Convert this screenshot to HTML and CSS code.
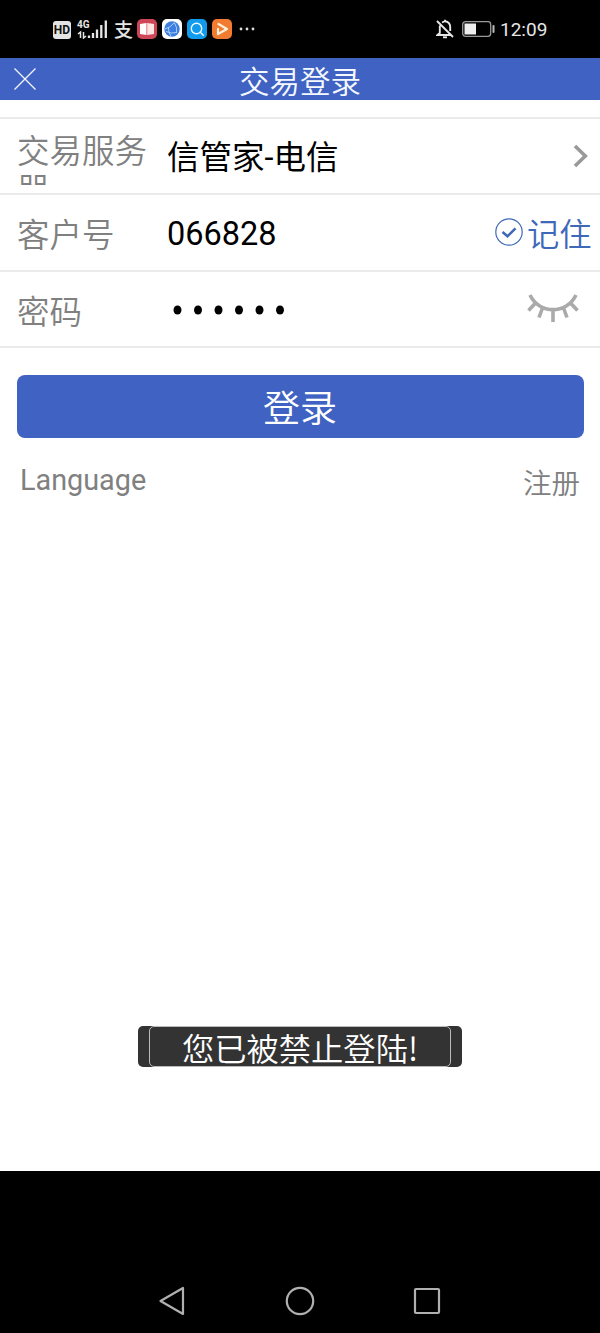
FILE: index.html
```html
<!DOCTYPE html>
<html lang="zh-CN">
<head>
<meta charset="utf-8">
<title>交易登录</title>
<link rel="stylesheet" href="styles.css">
</head>
<body>
<div class="phone">
  <div class="status">
    <div class="status-left">
      <span class="hd">HD</span>
      <span class="network">
        <span class="network-type">4G</span>
        <svg class="signal" width="32" height="20" viewBox="0 0 32 20" fill="none" stroke="#e6e6e6">
          <path d="M3.500 19v-6L1 15M6.500 13v6l2.500-2" stroke-width="1.500"/>
          <path d="M12 19v-2.500M16 19v-5M20 19V10.500M24.300 19V6M28.800 19V1.500" stroke-width="2.300"/>
        </svg>
      </span>
      <span class="pay">支</span>
      <svg class="app" viewBox="0 0 20 20"><rect width="20" height="20" rx="5" fill="#cf4658"/><path d="M3 5l6.500-1v12L3 15z" fill="#fff"/><path d="M10.200 4l6.800 1v10l-6.800 1z" fill="#fbe3e2"/></svg>
      <svg class="app" viewBox="0 0 20 20"><rect width="20" height="20" rx="5" fill="#fff"/><circle cx="10" cy="10" r="7.700" fill="#3c7fe0"/><path d="M3 10Q8 9 12.500 3.500M6.500 8.500Q6 13.500 9 17.300M12.500 4Q15.500 8 14.500 14M4 12.500Q9 15 15 13.500" fill="none" stroke="#b9d5fa" stroke-width=".9"/></svg>
      <svg class="app" viewBox="0 0 20 20"><rect width="20" height="20" rx="5" fill="#109bec"/><circle cx="9.500" cy="9.500" r="5.200" fill="none" stroke="#eef9ff" stroke-width="1.400"/><path d="M13.300 13.300l3 3" stroke="#eef9ff" stroke-width="1.500" stroke-linecap="round"/></svg>
      <svg class="app" viewBox="0 0 20 20"><rect width="20" height="20" rx="5" fill="#f17b31"/><path d="M6.500 5L15 10l-9 5V9.800" fill="none" stroke="#fff1d9" stroke-width="2.200" stroke-linejoin="round" stroke-linecap="round"/></svg>
      <svg class="more" width="16" height="4" viewBox="0 0 16 4" fill="#ddd"><circle cx="2" cy="2" r="1.400"/><circle cx="8" cy="2" r="1.400"/><circle cx="14" cy="2" r="1.400"/></svg>
    </div>
    <div class="status-right">
      <svg width="18" height="20" viewBox="0 0 18 20" fill="none" stroke="#e6e6e6" stroke-width="1.900"><path d="M3.800 6.500V14L1.500 16H15M6 3.500L9 2.200Q14.200 3 14.200 8v4M9 2.500V.8M1 2l16 16"/><path d="M7 18.300h4"/></svg>
      <svg width="33" height="16" viewBox="0 0 33 16"><rect x=".7" y=".7" width="28" height="14.600" rx="2.800" fill="none" stroke="#999" stroke-width="1.300"/><rect x="2.500" y="2.500" width="11.500" height="11" fill="#eee"/><rect x="30.500" y="4" width="2" height="8" rx="1" fill="#bbb"/></svg>
      <span class="time">12:09</span>
    </div>
  </div>

  <header class="titlebar">
    <svg class="close" width="22" height="22" viewBox="0 0 22 22" stroke="#f2f6ff" stroke-width="1.300"><path d="M.5.500l21 21M21.500.500l-21 21"/></svg>
    <h1 class="title">交易登录</h1>
  </header>

  <main class="content">
    <div class="form">
      <div class="row">
        <div class="label label-server">交易服务器</div>
        <div class="value">信管家-电信</div>
        <svg class="chevron" width="16" height="24" viewBox="0 0 16 24" fill="none" stroke="#999" stroke-width="3.600"><path d="M2 2l10.300 10L2 22"/></svg>
      </div>
      <div class="row">
        <div class="label">客户号</div>
        <div class="value number">066828</div>
        <div class="remember">
          <svg width="28" height="28" viewBox="0 0 28 28" fill="none" stroke="#3f68b8"><circle cx="14" cy="14" r="13.200" stroke-width="1.200"/><path d="M7.500 14l5 4.300 8-8" stroke-width="2.500"/></svg>
          <span>记住</span>
        </div>
      </div>
      <div class="row">
        <div class="label">密码</div>
        <svg class="dots" width="122" height="12" viewBox="0 0 122 12"><ellipse cx="10.500" cy="6" rx="4" ry="4.500"/><ellipse cx="31" cy="6" rx="4" ry="4.500"/><ellipse cx="51.500" cy="6" rx="4" ry="4.500"/><ellipse cx="72" cy="6" rx="4" ry="4.500"/><ellipse cx="92.500" cy="6" rx="4" ry="4.500"/><ellipse cx="113" cy="6" rx="4" ry="4.500"/></svg>
        <svg class="eye" width="52" height="30" viewBox="0 0 52 30" fill="none" stroke="#aaa" stroke-width="3.600"><path d="M3 2C12 21.500 40 21.500 49 2M9 9.500l-7.500 8M43 9.500l7.500 8M15.500 15l-3.500 9.500M26 17v12M36.500 15l3.500 9.500"/></svg>
      </div>
    </div>
    <button class="login">登录</button>
    <div class="links">
      <span class="language">Language</span>
      <span class="register">注册</span>
    </div>
    <div class="toast"><div class="toast-text">您已被禁止登陆!</div></div>
  </main>

  <nav class="navbar">
    <svg width="28" height="30" viewBox="0 0 28 30"><path d="M25 2v26L2.500 15z"/></svg>
    <svg width="30" height="30" viewBox="0 0 30 30"><circle cx="15" cy="15" r="13.200"/></svg>
    <svg class="recent" width="28" height="28" viewBox="0 0 28 28"><rect x="2" y="2" width="24" height="24" rx="1"/></svg>
  </nav>
</div>
</body>
</html>
```
FILE: styles.css
```css
* { box-sizing: border-box; }
body {
  margin: 0;
  background: #000;
  font-family: Roboto, "Noto Sans CJK SC", sans-serif;
}
svg { display: block; flex: none; }
.phone {
  width: 600px;
  height: 1333px;
  display: flex;
  flex-direction: column;
  overflow: hidden;
}
.status {
  height: 58px;
  padding: 0 53px;
  display: flex;
  align-items: center;
  justify-content: space-between;
  color: #e6e6e6;
}
.status-left { display: flex; align-items: center; }
.hd {
  width: 18px;
  height: 18px;
  margin-top: 2px;
  border-radius: 3px;
  background: #e4e4e4;
  color: #111;
  font: bold 12px/18px Roboto, sans-serif;
  text-align: center;
}
.network { display: grid; margin-left: 6px; width: 32px; }
.network > * { grid-area: 1 / 1; }
.network-type { font: bold 10px/11px Roboto, sans-serif; }
.pay {
  width: 19px;
  margin: 0 4px 0 5px;
  font: 500 19px/20px "Noto Sans CJK SC", sans-serif;
}
.app { width: 20px; height: 20px; margin-right: 5px; }
.more { margin-left: 2px; }
.status-right { display: flex; align-items: center; }
.status-right svg { margin-right: 8px; }
.status-right svg + svg { margin-right: 5px; }
.time { font-size: 19px; line-height: 20px; width: 47px; padding-top: 2px; }

.titlebar {
  height: 42px;
  padding: 0 14px;
  display: grid;
  grid-template-columns: 22px 1fr 22px;
  align-items: center;
  background: #4063c3;
  color: #f5f9ff;
}
.close { margin-bottom: 1px; }
.title {
  margin: 1px 0 0;
  font: 350 30.500px/40px "Noto Sans CJK SC", sans-serif;
  text-align: center;
}

.content {
  height: 1071px;
  padding-top: 16.500px;
  background: #fff;
  display: flex;
  flex-direction: column;
}
.form { border-top: 2px solid #ebebeb; }
.row {
  height: 76.600px;
  display: flex;
  align-items: center;
  padding-left: 17px;
  border-bottom: 2px solid #ebebeb;
}
.label {
  width: 150px;
  padding-top: 1px;
  color: #808080;
  font: 350 32.500px/39px "Noto Sans CJK SC", sans-serif;
}
.label-server {
  width: 132px;
  height: 56px;
  margin: 3px 18px 0 0;
  padding: 0;
  overflow: hidden;
  line-height: 39px;
}
.value {
  margin-top: 5px;
  color: #000;
  font: 400 32.500px/40px Roboto, "Noto Sans CJK SC", sans-serif;
}
.number { margin-top: 4px; }
.dots { margin-top: 3px; }
.chevron { margin: 0 11px 0 auto; }
.remember {
  margin: 0 8.500px 0 auto;
  display: flex;
  align-items: center;
  gap: 4px;
  color: #3f68b8;
  font: 350 32.300px/40px "Noto Sans CJK SC", sans-serif;
}
.eye { margin: 0 21px 1px auto; }

.login {
  width: 567px;
  height: 63px;
  margin: 26.500px 0 0 16.500px;
  padding: 0;
  border: 0;
  border-radius: 8px;
  background: #4063c3;
  color: #fff;
  font: 350 37px/61px "Noto Sans CJK SC", sans-serif;
}
.links {
  display: flex;
  justify-content: space-between;
  padding: 22px 20px 0;
  color: #808080;
  line-height: 40px;
}
.language { font-size: 28.800px; }
.register { font: 350 28.500px/43px "Noto Sans CJK SC", sans-serif; }
.toast {
  width: 324px;
  height: 41px;
  margin: auto auto 104.500px 138px;
  padding: 0 11px;
  border-radius: 5px;
  background: #333;
}
.toast-text {
  height: 41px;
  border: 1px solid #bbb;
  border-radius: 5px;
  color: #fff;
  font: 350 32.300px/41px "Noto Sans CJK SC", sans-serif;
  text-align: center;
}
.navbar {
  flex: 1;
  display: flex;
  align-items: flex-end;
  justify-content: space-between;
  padding: 0 159px 17px 158px;
}
.navbar svg { fill: none; stroke: #b0b0b0; stroke-width: 2.200; stroke-linejoin: round; }
.navbar .recent { margin-bottom: 1px; }
```
